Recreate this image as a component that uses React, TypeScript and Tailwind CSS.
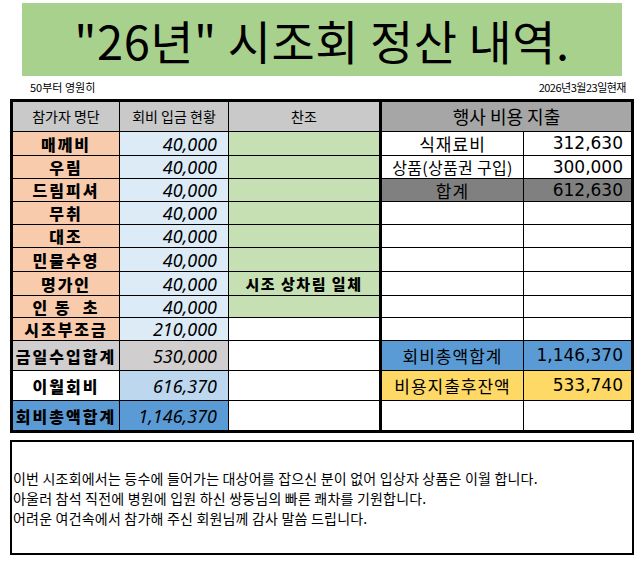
const KR = { fontFamily: '"Noto Sans CJK KR", "Noto Sans", sans-serif' };

type Left = {
  name: string;
  amount: string;
  nameBg: string;
  amountBg: string;
  chanjo?: string;
  chanjoBg: string;
  h: string;
};

const left: Left[] = [
  { name: "매께비", amount: "40,000", nameBg: "bg-[#f8cbad]", amountBg: "bg-[#ddebf7]", chanjoBg: "bg-[#c6e0b4]", h: "h-[24px]" },
  { name: "우림", amount: "40,000", nameBg: "bg-[#f8cbad]", amountBg: "bg-[#ddebf7]", chanjoBg: "bg-[#c6e0b4]", h: "h-[23px]" },
  { name: "드림피셔", amount: "40,000", nameBg: "bg-[#f8cbad]", amountBg: "bg-[#ddebf7]", chanjoBg: "bg-[#c6e0b4]", h: "h-[23px]" },
  { name: "무취", amount: "40,000", nameBg: "bg-[#f8cbad]", amountBg: "bg-[#ddebf7]", chanjoBg: "bg-[#c6e0b4]", h: "h-[23px]" },
  { name: "대조", amount: "40,000", nameBg: "bg-[#f8cbad]", amountBg: "bg-[#ddebf7]", chanjoBg: "bg-[#c6e0b4]", h: "h-[23px]" },
  { name: "민물수영", amount: "40,000", nameBg: "bg-[#f8cbad]", amountBg: "bg-[#ddebf7]", chanjoBg: "bg-[#c6e0b4]", h: "h-[24px]" },
  { name: "명가인", amount: "40,000", nameBg: "bg-[#f8cbad]", amountBg: "bg-[#ddebf7]", chanjo: "시조 상차림 일체", chanjoBg: "bg-[#c6e0b4]", h: "h-[24px]" },
  { name: "인 동  초", amount: "40,000", nameBg: "bg-[#f8cbad]", amountBg: "bg-[#ddebf7]", chanjoBg: "bg-[#c6e0b4]", h: "h-[22px]" },
  { name: "시조부조금", amount: "210,000", nameBg: "bg-[#f8cbad]", amountBg: "bg-[#ddebf7]", chanjoBg: "bg-white", h: "h-[23px]" },
  { name: "금일수입합계", amount: "530,000", nameBg: "bg-[#d0cece]", amountBg: "bg-[#d0cece]", chanjoBg: "bg-white", h: "h-[30px]" },
  { name: "이월회비", amount: "616,370", nameBg: "bg-white", amountBg: "bg-[#bdd7ee]", chanjoBg: "bg-white", h: "h-[30px]" },
  { name: "회비총액합계", amount: "1,146,370", nameBg: "bg-[#5b9bd5]", amountBg: "bg-[#5b9bd5]", chanjoBg: "bg-white", h: "h-[31px]" },
];

type Right = { label?: string; value?: string; bg?: string; valueBg?: string; small?: boolean };

const right: Right[] = [
  { label: "식재료비", value: "312,630" },
  { label: "상품(상품권 구입)", value: "300,000", small: true },
  { label: "합계", value: "612,630", bg: "bg-[#808080]", valueBg: "bg-[#808080]" },
  {},
  {},
  {},
  {},
  {},
  {},
  { label: "회비총액합계", value: "1,146,370", bg: "bg-[#5b9bd5]", valueBg: "bg-[#5b9bd5]" },
  { label: "비용지출후잔액", value: "533,740", bg: "bg-[#ffd966]", valueBg: "bg-[#ffd966]" },
  {},
];

export default function App() {
  return (
    <div className="w-[640px] h-[561px] bg-white text-black" style={KR}>
      {/* Title */}
      <div className="ml-[22px] mt-[3px] w-[600px] h-[73px] bg-[#a9d18e] flex items-center justify-center">
        <h1 className="text-[47px] leading-none tracking-[0.5px]">"26년" 시조회 정산 내역.</h1>
      </div>

      <div className="flex justify-between items-center h-[23px] pl-[30px] pr-[14px] text-[11px]">
        <span>50부터 영원히</span>
        <span className="tracking-[-0.5px]">2026년3월23일현재</span>
      </div>

      {/* Sheet */}
      <table className="ml-[10px] w-[624px] table-fixed border-collapse border-[3px] border-black">
        <colgroup>
          <col className="w-[108px]" />
          <col className="w-[109px]" />
          <col className="w-[152px]" />
          <col className="w-[143px]" />
          <col className="w-[109px]" />
        </colgroup>
        <tbody>
          <tr className="h-[31px]">
            <td className="border border-black bg-[#c9c9c9] text-center text-[14px]">참가자 명단</td>
            <td className="border border-black bg-[#c9c9c9] text-center text-[14px]">회비 입금 현황</td>
            <td className="border border-black border-r-[3px] bg-[#c9c9c9] text-center text-[14px]">찬조</td>
            <td colSpan={2} className="border border-black bg-[#a6a6a6] text-center text-[18px]">
              행사 비용 지출
            </td>
          </tr>
          {left.map((r, i) => {
            const rr = right[i];
            return (
              <tr key={i} className={r.h}>
                <td className={`border border-black ${r.nameBg} text-center text-[16px] font-black leading-none whitespace-pre tracking-[2px]`}>
                  {r.name}
                </td>
                <td
                  className={`border border-black ${r.amountBg} text-right pr-[11px] text-[18px] italic leading-none`}
                  style={{ fontFamily: '"Noto Sans", sans-serif' }}
                >
                  {r.amount}
                </td>
                <td className={`border border-black border-r-[3px] ${r.chanjoBg} text-center text-[15px] font-black leading-none tracking-[1.5px]`}>
                  {r.chanjo ?? ""}
                </td>
                <td
                  className={`border border-black ${rr.bg ?? "bg-white"} text-center ${rr.small ? "text-[16px] tracking-[0.3px]" : "text-[17px] tracking-[1px]"} leading-none whitespace-nowrap overflow-hidden`}
                >
                  {rr.label ?? ""}
                </td>
                <td
                  className={`border border-black ${rr.valueBg ?? "bg-white"} text-right pr-[8px] text-[17px] leading-none`}
                  style={{ fontFamily: '"DejaVu Sans", sans-serif' }}
                >
                  {rr.value ?? ""}
                </td>
              </tr>
            );
          })}
        </tbody>
      </table>

      {/* Notes */}
      <div className="ml-[10px] mt-[7px] w-[624px] h-[115px] border-2 border-black pt-[26px] pl-[1px] text-[14px] leading-[20px] tracking-[0.2px]">
        <p>이번 시조회에서는 등수에 들어가는 대상어를 잡으신 분이 없어 입상자 상품은 이월 합니다.</p>
        <p>아울러 참석 직전에 병원에 입원 하신 쌍둥님의 빠른 쾌차를 기원합니다.</p>
        <p>어려운 여건속에서 참가해 주신 회원님께 감사 말씀 드립니다.</p>
      </div>
    </div>
  );
}
